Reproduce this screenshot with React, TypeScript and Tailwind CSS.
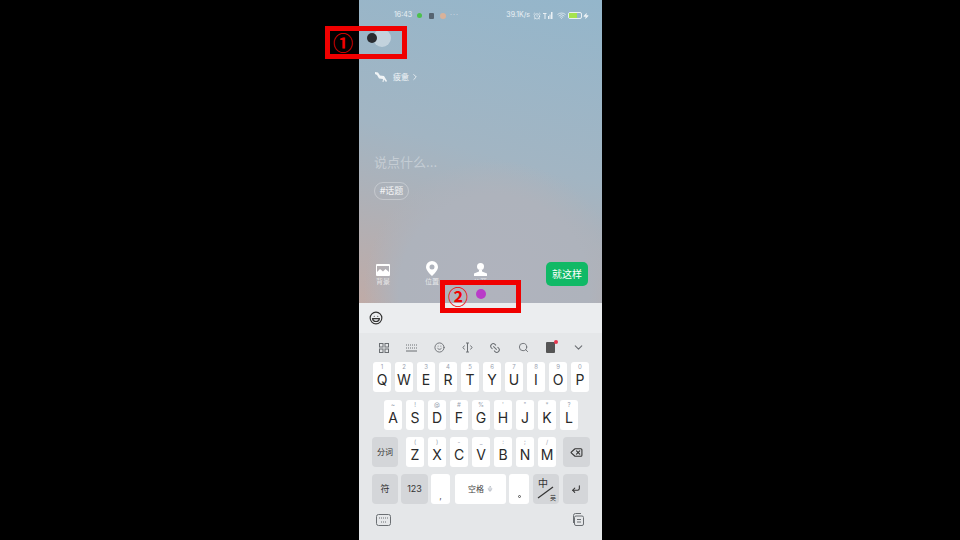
import React from "react";
import {
  ChevronDown,
  ChevronRight,
  CornerDownLeft,
  Delete,
  Laugh,
  Link2,
  Mic,
  Search,
  Smile,
  Wifi,
  AlarmClock,
  Zap,
} from "lucide-react";

const row1 = [
  ["1", "Q"],
  ["2", "W"],
  ["3", "E"],
  ["4", "R"],
  ["5", "T"],
  ["6", "Y"],
  ["7", "U"],
  ["8", "I"],
  ["9", "O"],
  ["0", "P"],
];
const row2 = [
  ["~", "A"],
  ["!", "S"],
  ["@", "D"],
  ["#", "F"],
  ["%", "G"],
  ["'", "H"],
  ['"', "J"],
  ["*", "K"],
  ["?", "L"],
];
const row3 = [
  ["(", "Z"],
  [")", "X"],
  ["-", "C"],
  ["_", "V"],
  [":", "B"],
  [";", "N"],
  ["/", "M"],
];

function Key({ top, label }: { top: string; label: string }) {
  return (
    <div className="w-[18px] h-full bg-white rounded-[3px] flex flex-col items-center pt-[1px]">
      <span className="text-[6px] leading-[8px] text-gray-400">{top}</span>
      <span className="text-[14px] leading-[17px] text-[#2a2a2a]">{label}</span>
    </div>
  );
}

function Action({ icon, label }: { icon: React.ReactNode; label: string }) {
  return (
    <div className="w-[24px] flex flex-col items-center text-white">
      {icon}
      <span className="text-[7px] leading-[9px] mt-[1px] text-white/70">{label}</span>
    </div>
  );
}

export default function App() {
  return (
    <div className="relative w-[960px] h-[540px] bg-black overflow-hidden font-['Inter','Noto_Sans_CJK_SC',sans-serif]">
      <div className="ml-[359px] w-[243px] h-full flex flex-col">
        {/* upper part with gradient */}
        <div className="h-[303px] flex flex-col bg-[radial-gradient(circle_at_135px_290px,#b0b3bd_0px,#aeb3bc_95px,transparent_130px),linear-gradient(195deg,#94b6cb_0%,#a2b5c3_50%,#bfaba7_100%)]">
          {/* status bar */}
          <div className="h-[30px] pl-[35px] pr-[13px] flex items-center text-white/80 text-[7px] pt-[1px]">
            <span className="w-[20px]">16:43</span>
            <span className="w-[5px] h-[5px] ml-[3px] rounded-full bg-[#4cc04c]"></span>
            <span className="w-[5px] h-[6px] ml-[7px] bg-[#39424a]/70 rounded-[1px]"></span>
            <span className="w-[6px] h-[6px] ml-[6px] rounded-full bg-[#d9b29a]"></span>
            <span className="ml-[4px] tracking-[1px] text-white/50">···</span>
            <span className="ml-auto">39.1K/s</span>
            <AlarmClock size={8} className="ml-[3px]" />
            <svg className="ml-[2px]" width="10" height="7" viewBox="0 0 10 7" fill="currentColor">
              <path d="M5 4h1v3H5zM6.500 2.500h1V7h-1zM8 0h1.500v7H8zM0 1h3.500v1H2.500v5h-1V2H0z" />
            </svg>
            <Wifi size={9} className="ml-[4px]" />
            <span className="ml-[2px] w-[14px] h-[7px] border border-white/80 rounded-[2px] flex">
              <span className="w-[8px] bg-[#a6e34f]"></span>
            </span>
            <Zap size={6} fill="currentColor" className="ml-[1px]" />
          </div>

          {/* avatar */}
          <div className="h-[18px] w-[18px] ml-[14px] mt-[-1px] rounded-full bg-white/40"></div>

          {/* mood */}
          <div className="mt-[24px] ml-[15px] flex items-center text-white/85">
            <svg width="14" height="12" viewBox="0 0 14 12" fill="currentColor">
              <path d="M1 1l3 .500 2 3 4 .500 3 5-1 1-2-2.500-.500 2.500H8.500L9 8 5 7.500 3 4 1 3z" />
            </svg>
            <span className="ml-[5px] text-[8px] leading-[10px]">疲惫</span>
            <ChevronRight size={10} className="ml-[1px]" />
          </div>

          {/* input */}
          <div className="mt-[70px] ml-[15px] text-[13px] leading-[18px] text-white/35">说点什么...</div>
          <div className="mt-[11px] ml-[15px] w-[35px] h-[18px] rounded-full border border-white/30 flex items-center justify-center text-[9px] text-white/85">
            #话题
          </div>

          {/* actions */}
          <div className="mt-auto mb-[17px] flex items-end pl-[12px] pr-[14px]">
            <Action
              icon={
                <svg width="14" height="12" viewBox="0 0 14 12" fill="currentColor">
                  <path
                    fillRule="evenodd"
                    d="M0 1a1 1 0 011-1h12a1 1 0 011 1v10a1 1 0 01-1 1H1a1 1 0 01-1-1zM1 2v6l3-3 3 2.500L9.500 5 13 8V2z"
                  />
                </svg>
              }
              label="背景"
            />
            <div className="w-[25px]"></div>
            <Action
              icon={
                <svg width="12" height="15" viewBox="0 0 12 15" fill="currentColor">
                  <path
                    fillRule="evenodd"
                    d="M6 0a6 6 0 016 6c0 3.500-4 7-6 9-2-2-6-5.500-6-9a6 6 0 016-6zm0 3.500a2.500 2.500 0 100 5 2.500 2.500 0 000-5z"
                  />
                </svg>
              }
              label="位置"
            />
            <div className="w-[24px]"></div>
            <Action
              icon={
                <svg width="13" height="13" viewBox="0 0 13 13" fill="currentColor">
                  <circle cx="6.500" cy="3.500" r="3.500" />
                  <path d="M5 7h3v1.500L13 10.500V13H0v-2.500L5 8.500z" />
                </svg>
              }
              label="公开"
            />
            <div className="ml-auto w-[42px] h-[24px] rounded-[5px] bg-[#10b966] text-white text-[10px] flex items-center justify-center">
              就这样
            </div>
          </div>
        </div>

        {/* emoji bar */}
        <div className="h-[30px] bg-[#ebedef] flex items-center pl-[10px]">
          <Laugh size={14} className="text-[#333]" />
        </div>

        {/* keyboard */}
        <div className="flex-1 bg-[#e5e7e9] flex flex-col">
          <div className="h-[29px] flex items-center justify-between pl-[20px] pr-[17px] text-[#6b6f73]">
            <svg width="10" height="10" viewBox="0 0 10 10" fill="none" stroke="currentColor">
              <rect x="0.5" y="0.5" width="3.5" height="3.5" />
              <rect x="6" y="0.5" width="3.5" height="3.5" />
              <rect x="0.5" y="6" width="3.5" height="3.5" />
              <rect x="6" y="6" width="3.5" height="3.5" />
            </svg>
            <svg width="11" height="8" viewBox="0 0 11 8" fill="none" stroke="currentColor">
              <path d="M0 1h11M0 4h11" strokeDasharray="1 1" />
              <path d="M0 7h11" />
            </svg>
            <Smile size={11} />
            <svg width="11" height="11" viewBox="0 0 11 11" fill="none" stroke="currentColor">
              <path d="M4 1h3M4 10h3M5.500 1v9M2.500 3.500L1 5.500l1.500 2M8.500 3.500L10 5.500l-1.500 2" />
            </svg>
            <Link2 size={12} className="rotate-45" />
            <Search size={11} />
            <div className="relative w-[9px] h-[11px] bg-[#555] rounded-[1px]">
              <span className="absolute -top-[2px] -right-[3px] w-[4px] h-[4px] rounded-full bg-[#e8364f]"></span>
            </div>
            <ChevronDown size={13} />
          </div>

          <div className="h-[30px] flex gap-[4px] pl-[14px]">
            {row1.map(([t, l]) => (
              <Key key={l} top={t} label={l} />
            ))}
          </div>

          <div className="h-[30px] mt-[8px] flex gap-[4px] pl-[25px]">
            {row2.map(([t, l]) => (
              <Key key={l} top={t} label={l} />
            ))}
          </div>

          <div className="h-[30px] mt-[7px] flex pl-[13px]">
            <div className="w-[26px] mr-[8px] bg-[#d4d6d9] rounded-[4px] flex items-center justify-center text-[8px] text-[#333]">
              分词
            </div>
            <div className="flex gap-[4px]">
              {row3.map(([t, l]) => (
                <Key key={l} top={t} label={l} />
              ))}
            </div>
            <div className="w-[27px] ml-[7px] bg-[#d4d6d9] rounded-[4px] flex items-center justify-center text-[#333]">
              <Delete size={13} />
            </div>
          </div>

          <div className="h-[30px] mt-[7px] flex pl-[13px]">
            <div className="w-[26px] bg-[#d4d6d9] rounded-[4px] flex items-center justify-center text-[9px] text-[#333]">
              符
            </div>
            <div className="w-[27px] ml-[3px] bg-[#d4d6d9] rounded-[4px] flex items-center justify-center text-[9px] text-[#333]">
              123
            </div>
            <div className="w-[19px] ml-[3px] bg-white rounded-[3px] flex items-end justify-center pb-[2px] text-[9px] leading-[12px] text-[#555]">
              ,
            </div>
            <div className="w-[51px] ml-[5px] bg-white rounded-[3px] flex items-center justify-center gap-[3px] text-[8px] text-[#444]">
              空格
              <Mic size={6} className="text-gray-400" />
            </div>
            <div className="w-[20px] ml-[3px] bg-white rounded-[3px] flex items-end justify-center pb-[6px]">
              <span className="w-[3px] h-[3px] rounded-full border border-[#555]"></span>
            </div>
            <div className="relative w-[26px] ml-[4px] bg-[#d4d6d9] rounded-[4px] text-[#333]">
              <span className="absolute left-[5px] top-[3px] text-[10px] leading-[12px]">中</span>
              <span className="absolute right-[3px] bottom-[3px] text-[6px] leading-[7px]">英</span>
              <svg className="absolute inset-0" width="26" height="30" viewBox="0 0 26 30" stroke="currentColor" strokeWidth="1.200">
                <path d="M5 24L20 13" />
              </svg>
            </div>
            <div className="w-[25px] ml-[4px] bg-[#d4d6d9] rounded-[4px] flex items-center justify-center text-[#333]">
              <CornerDownLeft size={10} strokeWidth={2.500} />
            </div>
          </div>

          <div className="flex justify-between items-center pl-[17px] pr-[18px] mt-[9px] text-[#6b6f73]">
            <svg width="15" height="12" viewBox="0 0 15 12" fill="none" stroke="currentColor">
              <rect x="0.5" y="0.5" width="14" height="11" rx="2" />
              <path d="M3 4h9M5 8h5" strokeDasharray="1 1" />
            </svg>
            <svg width="13" height="13" viewBox="0 0 13 13" fill="none" stroke="currentColor">
              <path d="M2.500 10V2.500a2 2 0 012-2H10" />
              <rect x="3.500" y="3" width="9" height="9.500" rx="1.500" />
              <path d="M6 6.500h4M6 9h4" />
            </svg>
          </div>
        </div>
      </div>

      {/* annotations */}
      <div className="absolute left-[325px] top-[26px] w-[82px] h-[33px] border-[5px] border-[#f00000]"></div>
      <div className="absolute left-[333px] top-[29px] text-[20px] leading-[28px] font-bold text-[#f00000] font-['Noto_Sans_CJK_SC',sans-serif]">①</div>
      <div className="absolute left-[367px] top-[33px] w-[10px] h-[10px] rounded-full bg-[#2a2c30]"></div>
      <div className="absolute left-[440px] top-[280px] w-[81px] h-[33px] border-[5px] border-[#f00000]"></div>
      <div className="absolute left-[448px] top-[283px] text-[20px] leading-[28px] font-bold text-[#f00000] font-['Noto_Sans_CJK_SC',sans-serif]">②</div>
      <div className="absolute left-[476px] top-[289px] w-[10px] h-[10px] rounded-full bg-[#b93cc8]"></div>
    </div>
  );
}
